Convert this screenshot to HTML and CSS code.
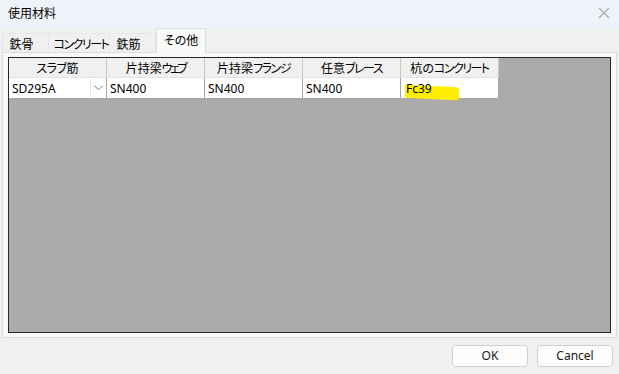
FILE: index.html
```html
<!DOCTYPE html>
<html lang="ja">
<head>
<meta charset="utf-8">
<link rel="stylesheet" href="styles.css">
</head>
<body>
<div class="dialog">
  <div class="titlebar">
    <span class="title">使用材料</span>
    <svg class="close" width="12" height="12" viewBox="0 0 12 12"><path d="M1 1 L11 11 M11 1 L1 11" stroke="#a8a8a8" stroke-width="1.1" fill="none"/></svg>
  </div>
  <div class="tabs">
    <div class="tab t1">鉄骨</div>
    <div class="tab t2"><span class="kana">コンクリート</span></div>
    <div class="tab t3">鉄筋</div>
    <div class="tab active">その他</div>
  </div>
  <div class="panel">
    <div class="grid">
      <div class="row head">
        <div class="cell"><span class="kana k1">スラブ</span>筋</div>
        <div class="cell">片持梁<span class="kana k2">ウェブ</span></div>
        <div class="cell">片持梁<span class="kana">フランジ</span></div>
        <div class="cell">任意<span class="kana">ブレース</span></div>
        <div class="cell">杭の<span class="kana">コンクリート</span></div>
      </div>
      <div class="row data">
        <div class="cell combo"><span>SD295A</span><span class="arrow"><svg width="9" height="6" viewBox="0 0 9 6"><path d="M0.5 0.8 L4.5 4.8 L8.5 0.8" stroke="#7a7a7a" stroke-width="1" fill="none"/></svg></span></div>
        <div class="cell">SN400</div>
        <div class="cell">SN400</div>
        <div class="cell">SN400</div>
        <div class="cell hl"><span class="mark"></span><span class="txt">Fc39</span></div>
      </div>
    </div>
  </div>
  <div class="footer">
    <button class="btn">OK</button>
    <button class="btn">Cancel</button>
  </div>
</div>
</body>
</html>
```
FILE: styles.css
```css
html, body {
  margin: 0;
  padding: 0;
  background: #f0f0f0;
}
body {
  font-family: "Noto Sans", "Noto Sans CJK JP", sans-serif;
  font-size: 12px;
  color: #000;
}
.dialog {
  width: 619px;
  height: 374px;
  display: flex;
  flex-direction: column;
  overflow: hidden;
}
.title, .tab, .head .cell {
  font-family: "Noto Sans CJK JP", sans-serif;
  font-feature-settings: "palt" 1;
}
.kana {
  letter-spacing: -1.5px;
}
.k1 { letter-spacing: -0.5px; }
.k2 { letter-spacing: -2.5px; }
.titlebar {
  height: 28px;
  background: #eef2f9;
  display: flex;
  align-items: center;
  justify-content: space-between;
  padding: 0 9px 0 8px;
  flex: none;
}
.title {
  font-size: 12px;
  line-height: 14px;
  margin-top: -2px;
}
.close {
  margin-top: -2px;
}
.tabs {
  height: 24px;
  display: flex;
  align-items: flex-end;
  padding-left: 2px;
  flex: none;
  position: relative;
  z-index: 1;
}
.tab {
  height: 19px;
  line-height: 19px;
  border: 1px solid #e6e6e6;
  border-bottom: none;
  background: #f0f0f0;
  text-align: center;
  box-sizing: border-box;
  white-space: nowrap;
}
.t1 { width: 47px; padding-right: 8px; }
.t2 { width: 61px; border-left: none; padding-left: 4px; }
.t3 { width: 46px; border-left: none; padding-right: 8px; }
.tab.active {
  width: 50px;
  height: 25px;
  line-height: 22px;
  background: #f9f9f9;
  border-color: #dcdcdc;
  margin-bottom: -1px;
  padding-bottom: 2px;
}
.panel {
  margin: 0 2px;
  height: 286px;
  box-sizing: border-box;
  border: 1px solid #dcdcdc;
  background: #f9f9f9;
  padding: 4px 5px;
  flex: none;
}
.grid {
  height: 276px;
  box-sizing: border-box;
  border: 1px solid #262626;
  background: #ababab;
}
.row {
  display: flex;
}
.row .cell {
  width: 98px;
  box-sizing: border-box;
  border-right: 1px solid #a0a0a0;
  padding: 0 3px;
  white-space: nowrap;
}
.head .cell {
  height: 20px;
  line-height: 20px;
  background: #f0f0f0;
  text-align: center;
  border-right-color: #c9c9c9;
  border-bottom: 1px solid #e2e2e2;
}
.data .cell {
  height: 21px;
  line-height: 21px;
  background: #fff;
  border-right-color: #a6a6a6;
  border-bottom: 1px solid #a6a6a6;
}
.data .hl {
  padding-left: 5px;
}
.combo {
  display: flex;
  justify-content: space-between;
  align-items: center;
  padding-right: 0 !important;
}
.arrow {
  width: 14px;
  height: 19px;
  border-left: 1px solid #e6e6e6;
  display: flex;
  align-items: center;
  justify-content: center;
  margin-right: 1px;
}
.hl {
  position: relative;
}
.mark {
  position: absolute;
  left: 4px;
  top: 8px;
  width: 54px;
  height: 13px;
  background: #ffee00;
  border-radius: 1px 3px 4px 1px;
  transform: skewY(3deg);
}
.txt {
  position: relative;
}
.footer {
  flex: 1;
  display: flex;
  justify-content: flex-end;
  gap: 9px;
  padding: 7px 6px 0 0;
  align-items: flex-start;
}
.btn {
  width: 76px;
  height: 22px;
  font-family: "Noto Sans", sans-serif;
  font-size: 12px;
  color: #1a1a1a;
  background: #fdfdfd;
  border: 1px solid #d0d0d0;
  border-radius: 4px;
  padding: 0;
  line-height: 18px;
}
```
